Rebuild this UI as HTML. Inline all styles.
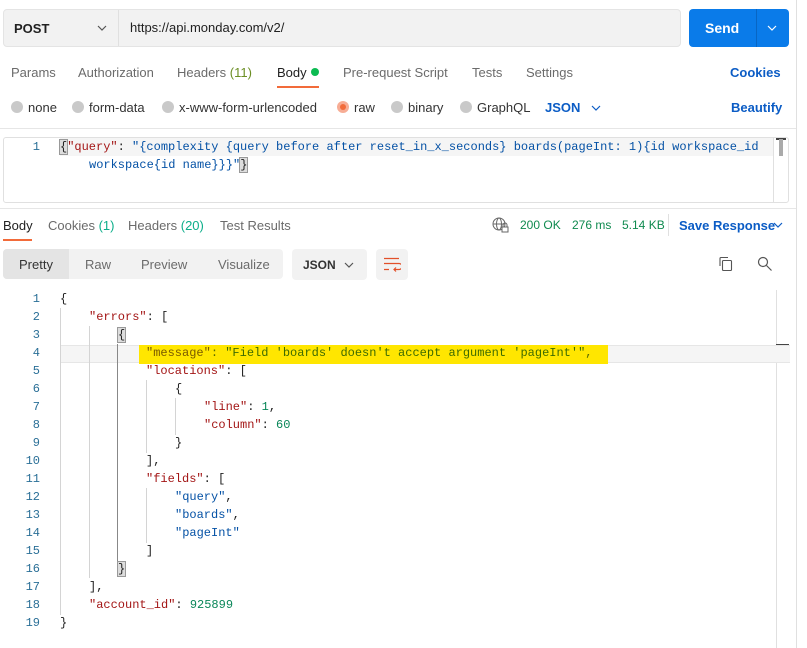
<!DOCTYPE html>
<html><head><meta charset="utf-8"><style>
*{margin:0;padding:0;box-sizing:border-box}
body{width:807px;height:648px;background:#fff;font-family:"Liberation Sans",sans-serif;font-size:13px;color:#212121;position:relative;overflow:hidden}
.a{position:absolute;white-space:nowrap}
.g{color:#6b6b6b}
.blue{color:#0b5cc5;font-weight:bold}
.rad{position:absolute;width:12px;height:12px;border-radius:50%;background:#c9c9c9;top:101px}
.code{font-family:"Liberation Mono",monospace;font-size:12px}
.ln{position:absolute;left:0;width:40px;text-align:right;color:#2a6f97;font-family:"Liberation Mono",monospace;font-size:12px}
.cl{position:absolute;font-family:"Liberation Mono",monospace;font-size:12px;white-space:pre;color:#212121}
.k{color:#a31515}.s{color:#0451a5}.n{color:#098658}
.vg{position:absolute;width:1px;background:#d4d4d4}
</style></head><body>
<div class="a" style="left:796px;top:0;width:1px;height:648px;background:#e0e0e0"></div>
<!-- URL bar -->
<div class="a" style="left:3px;top:9px;width:678px;height:38px;background:#f2f2f2;border:1px solid #e4e4e4;border-radius:4px"></div>
<div class="a" style="left:118px;top:10px;width:1px;height:36px;background:#e0e0e0"></div>
<div class="a" style="left:14px;top:21px;font-weight:bold;font-size:13px">POST</div>
<svg class="a" style="left:97px;top:25px" width="10" height="6"><path d="M1 1l4 4 4-4" fill="none" stroke="#555" stroke-width="1.2"/></svg>
<div class="a" style="left:130px;top:20px;font-size:13px;color:#212121">https://api.monday.com/v2/</div>
<div class="a" style="left:689px;top:9px;width:100px;height:38px;background:#0a7be9;border-radius:4px"></div>
<div class="a" style="left:756px;top:9px;width:1px;height:38px;background:#0866c4"></div>
<div class="a" style="left:705px;top:20px;color:#fff;font-weight:bold;font-size:14px">Send</div>
<svg class="a" style="left:767px;top:25px" width="10" height="6"><path d="M1 1l4 4 4-4" fill="none" stroke="#fff" stroke-width="1.2"/></svg>
<!-- tabs -->
<div class="a g" style="left:11px;top:65px">Params</div>
<div class="a g" style="left:78px;top:65px">Authorization</div>
<div class="a g" style="left:177px;top:65px">Headers <span style="color:#6b8e23">(11)</span></div>
<div class="a" style="left:277px;top:65px">Body</div>
<div class="a" style="left:311px;top:68px;width:8px;height:8px;border-radius:50%;background:#0cbb52"></div>
<div class="a" style="left:277px;top:86px;width:42px;height:2px;background:#f26b3a"></div>
<div class="a g" style="left:343px;top:65px">Pre-request Script</div>
<div class="a g" style="left:472px;top:65px">Tests</div>
<div class="a g" style="left:526px;top:65px">Settings</div>
<div class="a blue" style="left:730px;top:65px">Cookies</div>
<!-- radios -->
<div class="rad" style="left:11px"></div><div class="a" style="left:28px;top:100px;color:#333">none</div>
<div class="rad" style="left:72px"></div><div class="a" style="left:89px;top:100px;color:#333">form-data</div>
<div class="rad" style="left:162px"></div><div class="a" style="left:179px;top:100px;color:#333">x-www-form-urlencoded</div>
<div class="rad" style="left:337px;background:#f7ad95"></div><div class="a" style="left:340px;top:104px;width:6px;height:6px;border-radius:50%;background:#f26b3a"></div><div class="a" style="left:354px;top:100px;color:#333">raw</div>
<div class="rad" style="left:391px"></div><div class="a" style="left:408px;top:100px;color:#333">binary</div>
<div class="rad" style="left:460px"></div><div class="a" style="left:477px;top:100px;color:#333">GraphQL</div>
<div class="a blue" style="left:545px;top:100px">JSON</div>
<svg class="a" style="left:591px;top:105px" width="10" height="6"><path d="M1 1l4 4 4-4" fill="none" stroke="#0b5cc5" stroke-width="1.2"/></svg>
<div class="a blue" style="left:731px;top:100px">Beautify</div>
<div class="a" style="left:0;top:128px;width:796px;height:1px;background:#e6e6e6"></div>
<!-- request editor -->
<div class="a" style="left:3px;top:137px;width:786px;height:66px;border:1px solid #e0e0e0;border-radius:3px"></div>
<div class="a" style="left:60px;top:138px;width:713px;height:18px;background:#f5f5f5"></div>
<div class="a" style="left:773px;top:138px;width:1px;height:64px;background:#e0e0e0"></div>
<div class="a" style="left:776px;top:138px;width:10px;height:2px;background:#444"></div>
<div class="a" style="left:779px;top:139px;width:4px;height:17px;background:#aaa"></div>
<div class="ln" style="top:140px">1</div>
<div class="cl" style="left:60px;top:140px"><span style="background:#ddd;outline:1px solid #999">{</span><span class="k">"query"</span>: <span class="s">"{complexity {query before after reset_in_x_seconds} boards(pageInt: 1){id workspace_id</span></div>
<div class="cl s" style="left:89px;top:158px">workspace{id name}}}"<span style="color:#212121;background:#ddd;outline:1px solid #999">}</span></div>
<div class="a" style="left:0;top:208px;width:796px;height:1px;background:#e6e6e6"></div>
<!-- response tabs -->
<div class="a" style="left:3px;top:218px">Body</div>
<div class="a" style="left:3px;top:239px;width:29px;height:2px;background:#f26b3a"></div>
<div class="a g" style="left:48px;top:218px">Cookies <span style="color:#0cae8a">(1)</span></div>
<div class="a g" style="left:128px;top:218px">Headers <span style="color:#0cae8a">(20)</span></div>
<div class="a g" style="left:220px;top:218px">Test Results</div>
<svg class="a" style="left:492px;top:217px" width="17" height="17" fill="none" stroke="#666" stroke-width="1"><circle cx="7" cy="7" r="6"/><ellipse cx="7" cy="7" rx="2.5" ry="6"/><path d="M1 7h12"/><rect x="10" y="10" width="6" height="5" fill="#fff"/><path d="M11 10v-2a2 2 0 014 0v2"/></svg>
<div class="a" style="left:520px;top:218px;color:#0f8a4f;font-size:12px">200 OK</div>
<div class="a" style="left:572px;top:218px;color:#0f8a4f;font-size:12px">276 ms</div>
<div class="a" style="left:622px;top:218px;color:#0f8a4f;font-size:12px">5.14 KB</div>
<div class="a" style="left:668px;top:214px;width:1px;height:22px;background:#e0e0e0"></div>
<div class="a blue" style="left:679px;top:218px">Save Response</div>
<svg class="a" style="left:773px;top:222px" width="10" height="6"><path d="M1 1l4 4 4-4" fill="none" stroke="#0b5cc5" stroke-width="1.2"/></svg>
<!-- toolbar -->
<div class="a" style="left:3px;top:249px;width:280px;height:30px;background:#f2f2f2;border-radius:4px"></div>
<div class="a" style="left:3px;top:249px;width:66px;height:30px;background:#e4e4e4;border-radius:4px 0 0 4px"></div>
<div class="a" style="left:19px;top:257px;color:#333">Pretty</div>
<div class="a g" style="left:85px;top:257px">Raw</div>
<div class="a g" style="left:141px;top:257px">Preview</div>
<div class="a g" style="left:218px;top:257px">Visualize</div>
<div class="a" style="left:292px;top:249px;width:75px;height:31px;background:#f2f2f2;border-radius:4px"></div>
<div class="a" style="left:303px;top:258px;font-weight:bold;font-size:12px;color:#333">JSON</div>
<svg class="a" style="left:344px;top:262px" width="10" height="6"><path d="M1 1l4 4 4-4" fill="none" stroke="#555" stroke-width="1.2"/></svg>
<div class="a" style="left:376px;top:249px;width:32px;height:31px;background:#f2f2f2;border-radius:4px"></div>
<svg class="a" style="left:383px;top:257px" width="18" height="15" fill="none" stroke="#e2502a" stroke-width="1.2"><path d="M1 1.5h15M1 6.5h15a3 3 0 010 6h-5M1 12.5h5M13 10.5l-2 2 2 2"/></svg>
<svg class="a" style="left:717px;top:256px" width="16" height="16" fill="none" stroke="#555" stroke-width="1.1"><path d="M3 10V2.5a1 1 0 011-1h7"/><rect x="5.5" y="4.5" width="9" height="10" rx="1"/></svg>
<svg class="a" style="left:757px;top:256px" width="16" height="16" fill="none" stroke="#555" stroke-width="1.2"><circle cx="6" cy="6" r="4.5"/><path d="M9.5 9.5l5 5"/></svg>
<!-- response code -->
<div class="a" style="left:776px;top:290px;width:1px;height:358px;background:#e0e0e0"></div>
<div class="a" style="left:776px;top:344px;width:13px;height:2px;background:#444"></div>
<div class="a" style="left:779px;top:345px;width:5px;height:17px;background:#aaa"></div>
<div class="a" style="left:60px;top:345px;width:730px;height:18px;background:#f5f5f5;border-top:1px solid #e6e6e6;border-bottom:1px solid #e6e6e6"></div>
<div class="a" style="left:139px;top:345px;width:469px;height:19px;background:#ffe600"></div>
<div class="vg" style="left:60px;top:308px;height:307px"></div>
<div class="vg" style="left:89px;top:326px;height:252px"></div>
<div class="vg" style="left:117px;top:344px;height:226px;background:#888"></div>
<div class="vg" style="left:146px;top:380px;height:73px"></div>
<div class="vg" style="left:146px;top:488px;height:55px"></div>
<div class="vg" style="left:175px;top:398px;height:37px"></div>
<div class="ln" style="top:292px">1</div><div class="ln" style="top:310px">2</div><div class="ln" style="top:328px">3</div><div class="ln" style="top:346px">4</div><div class="ln" style="top:364px">5</div><div class="ln" style="top:382px">6</div><div class="ln" style="top:400px">7</div><div class="ln" style="top:418px">8</div><div class="ln" style="top:436px">9</div><div class="ln" style="top:454px">10</div><div class="ln" style="top:472px">11</div><div class="ln" style="top:490px">12</div><div class="ln" style="top:508px">13</div><div class="ln" style="top:526px">14</div><div class="ln" style="top:544px">15</div><div class="ln" style="top:562px">16</div><div class="ln" style="top:580px">17</div><div class="ln" style="top:598px">18</div><div class="ln" style="top:616px">19</div>
<div class="cl" style="left:60px;top:292px">{</div>
<div class="cl" style="left:89px;top:310px"><span class="k">"errors"</span>: [</div>
<div class="cl" style="left:118px;top:328px"><span style="background:#ddd;outline:1px solid #999">{</span></div>
<div class="cl" style="left:146px;top:346px;color:#5a6b00"><span style="color:#7a5a00">"message"</span>: <span style="color:#3d6b00">"Field 'boards' doesn't accept argument 'pageInt'"</span>,</div>
<div class="cl" style="left:146px;top:364px"><span class="k">"locations"</span>: [</div>
<div class="cl" style="left:175px;top:382px">{</div>
<div class="cl" style="left:204px;top:400px"><span class="k">"line"</span>: <span class="n">1</span>,</div>
<div class="cl" style="left:204px;top:418px"><span class="k">"column"</span>: <span class="n">60</span></div>
<div class="cl" style="left:175px;top:436px">}</div>
<div class="cl" style="left:146px;top:454px">],</div>
<div class="cl" style="left:146px;top:472px"><span class="k">"fields"</span>: [</div>
<div class="cl" style="left:175px;top:490px"><span class="s">"query"</span>,</div>
<div class="cl" style="left:175px;top:508px"><span class="s">"boards"</span>,</div>
<div class="cl" style="left:175px;top:526px"><span class="s">"pageInt"</span></div>
<div class="cl" style="left:146px;top:544px">]</div>
<div class="cl" style="left:118px;top:562px"><span style="background:#ddd;outline:1px solid #999">}</span></div>
<div class="cl" style="left:89px;top:580px">],</div>
<div class="cl" style="left:89px;top:598px"><span class="k">"account_id"</span>: <span class="n">925899</span></div>
<div class="cl" style="left:60px;top:616px">}</div>
</body></html>
